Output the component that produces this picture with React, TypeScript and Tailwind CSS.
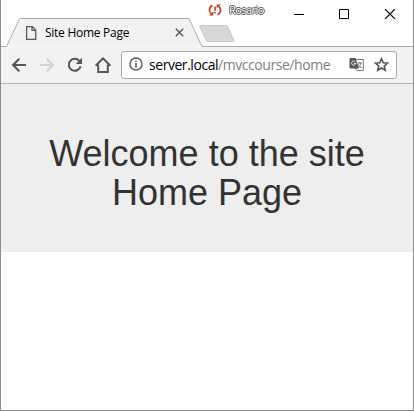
function Titlebar() {
  return (
    <header className="relative flex h-[47px] w-full items-start bg-white">
      <svg className="absolute inset-0 h-[47px] w-full" viewBox="1 0 412 47" preserveAspectRatio="none" fill="none">
        <path d="M1 46.5H6.5L19.3 19.2Q19.7 18.5 20.5 18.5H189L202 46.5H413" fill="#f2f2f2" stroke="#aaaaaa" />
        <path d="M201 25.5H226Q227.2 25.5 227.7 26.5L234 40.5Q234.5 41.5 233 41.5H208Q206.8 41.5 206.3 40.5L200 27Q199.5 25.5 201 25.5Z" fill="#d7d7d7" stroke="#c9c9c9" />
      </svg>
      <div className="relative mt-[19px] ml-[18px] flex h-[27px] w-[182px] items-center">
        <svg className="ml-[6px] h-[16px] w-[12px] shrink-0" viewBox="0 0 12 16" fill="none" stroke="#5a5a5a" strokeWidth="1.3">
          <path d="M1.6 1.6H7.3L10.7 5V14.4H1.6ZM7 1.6V5.3H10.7" />
        </svg>
        <span className="ml-[8px] w-[104px] whitespace-nowrap text-[12px] leading-[20px] tracking-[-0.27px] text-black">Site Home Page</span>
        <svg className="ml-[26px] h-[9px] w-[9px] shrink-0" viewBox="0 0 9 9" stroke="#5a5a5a" strokeWidth="1.5">
          <path d="M.8.8L8.2 8.2M8.2.8L.8 8.2" />
        </svg>
      </div>
      <div className="relative ml-[7px] flex items-center pt-[2px]">
        <svg className="h-[14px] w-[14px]" viewBox="0 0 14 14" fill="none" stroke="#cf3e31" strokeWidth="1.7">
          <path d="M4.4 2.4C.7 4 .7 8.6 3.4 10.8M9.6 11.6C13.3 10 13.3 5.4 10.6 3.2" />
          <path d="M1 12.5H5.4V8.5ZM13 1.5H8.6V5.5Z" fill="#cf3e31" stroke="none" />
          <path d="M7 3.6V7.7M7 9V10.6" />
        </svg>
        <span className="ml-[7px] text-[11px] leading-[15px] tracking-[-0.55px] text-white [text-shadow:-1px_0_#555,1px_0_#555,0_-1px_#555,0_1px_#555]">Rosario</span>
      </div>
      <svg className="absolute top-[9px] left-[293px] h-[10px] w-[102px]" viewBox="0 0 102 10" fill="none" stroke="#000">
        <path d="M0 5.5H10M45.5.5H54.5V9.5H45.5Z" />
        <path d="M91 0L101 10M101 0L91 10" strokeWidth="1.1" />
      </svg>
    </header>
  );
}

function Toolbar() {
  return (
    <nav className="flex h-[37px] items-center border-b border-[#b5b5b5] bg-[#f2f2f2] pl-[10px]">
      <svg className="h-[16px] w-[16px] shrink-0" viewBox="0 0 16 16" fill="none" stroke="#555" strokeWidth="2">
        <path d="M15 8H2.5M8.3 1.7L2 8L8.3 14.3" />
      </svg>
      <svg className="ml-[12px] h-[16px] w-[16px] shrink-0" viewBox="0 0 16 16" fill="none" stroke="#d2d2d2" strokeWidth="2">
        <path d="M1 8H13.5M7.7 1.7L14 8L7.7 14.3" />
      </svg>
      <svg className="ml-[12px] h-[16px] w-[16px] shrink-0" viewBox="0 0 16 16" fill="none" stroke="#555" strokeWidth="2">
        <path d="M13.6 9.3A6 6 0 1 1 12.3 3.8" />
        <path d="M15 .8V7H8.8Z" fill="#555" stroke="none" />
      </svg>
      <svg className="ml-[11px] h-[18px] w-[18px] shrink-0" viewBox="0 0 18 18" fill="none" stroke="#555" strokeWidth="2">
        <path d="M1.7 9.7L9 2.4L16.3 9.7M4.2 8.5V16H7M13.8 8.5V16H11M4.2 16H13.8" />
      </svg>
      <div className="ml-[9px] flex h-[28px] w-[276px] items-center rounded-[3px] border border-[#a8a8a8] bg-white">
        <svg className="mb-[2px] ml-[7px] h-[14px] w-[14px] shrink-0" viewBox="0 0 14 14" fill="none" stroke="#5a5a5a" strokeWidth="1.4">
          <circle cx="7" cy="7" r="6" />
          <path d="M7 6V10.6M7 3.4V5" strokeWidth="1.6" />
        </svg>
        <span className="ml-[6px] w-[200px] whitespace-nowrap text-[14px] leading-[20px] tracking-[-0.45px] text-black">
          server.local<span className="text-[#808080]">/mvccourse/home</span>
        </span>
        <svg className="mb-[2px] h-[15px] w-[15px] shrink-0" viewBox="0 0 15 15" fill="none">
          <path d="M6 2.5H14.3V13.5H8L6 11Z" fill="#fff" stroke="#777" />
          <path d="M8.5 6H13M10.8 4.8V6M12.2 6C11.8 8 10.3 9.8 8.8 10.6M9.3 7.2C10 9 11.5 10.3 13 11" stroke="#777" />
          <path d="M1.5 1H6.5L10 11.5H1.5Q.5 11.5.5 10.5V2Q.5 1 1.5 1Z" fill="#555" />
          <path d="M6.4 4.8A2.1 2.1 0 1 0 6.8 6.4H4.8" stroke="#f4f4f4" />
        </svg>
        <svg className="mb-[2px] ml-[10px] h-[15px] w-[15px] shrink-0" viewBox="0 0 15 15" fill="none" stroke="#555" strokeWidth="1.6">
          <path d="M7.5 1.7L9.2 5.7L13.6 6.1L10.3 9L11.3 13.3L7.5 11L3.7 13.3L4.7 9L1.4 6.1L5.8 5.7Z" />
        </svg>
      </div>
    </nav>
  );
}

export default function App() {
  return (
    <div className="flex h-[411px] w-[414px] flex-col overflow-hidden border-x border-b border-[#8c8c8c] bg-white font-['Open_Sans','Noto_Sans',sans-serif]">
      <Titlebar />
      <Toolbar />
      <main className="h-[168px] bg-[#eeeeee] px-[15px] pt-[50px] text-center">
        <h1 className="font-['Liberation_Sans',Arial,sans-serif] text-[36px] leading-[39px] text-[#333333]">
          Welcome to the site
          <br />
          Home Page
        </h1>
      </main>
    </div>
  );
}
